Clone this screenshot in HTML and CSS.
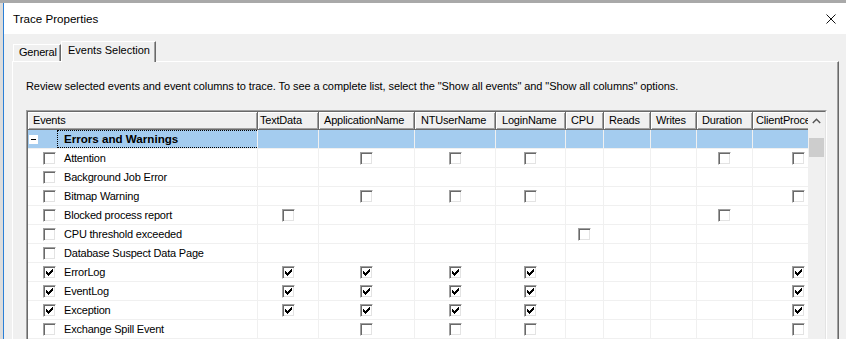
FILE: index.html
```html
<!DOCTYPE html>
<html>
<head>
<meta charset="utf-8">
<title>Trace Properties</title>
<link rel="stylesheet" href="styles.css">
</head>
<body>
<svg class="defs" width="0" height="0" aria-hidden="true">
  <symbol id="ck" viewBox="0 0 7 7">
    <path d="M6 0h1v1h-1z M5 1h2v1h-2z M0 2h1v1h-1z M4 2h3v1h-3z M0 3h2v1h-2z M3 3h3v1h-3z M0 4h5v1h-5z M1 5h3v1h-3z M2 6h1v1h-1z" fill="#000"/>
  </symbol>
</svg>
<div class="screen">
  <div class="left-strip"></div>
  <div class="window">
    <div class="titlebar">
      <span class="title">Trace Properties</span>
      <svg class="close" width="10" height="10" viewBox="0 0 10 10"><path d="M0.5 0.5L9.5 9.5M9.5 0.5L0.5 9.5" stroke="#111" stroke-width="1"/></svg>
    </div>
    <div class="client">
      <div class="tabs">
        <div class="tab general">General</div>
        <div class="tab selected">Events Selection</div>
      </div>
      <div class="panel">
        <p class="desc">Review selected events and event columns to trace. To see a complete list, select the "Show all events" and "Show all columns" options.</p>
        <div class="grid">
          <div class="grid-in">
            <div class="table-wrap">
              <div class="row head">
                <div class="h">Events</div>
                <div class="h td">TextData</div>
                <div class="h">ApplicationName</div>
                <div class="h nt">NTUserName</div>
                <div class="h nt">LoginName</div>
                <div class="h">CPU</div>
                <div class="h">Reads</div>
                <div class="h">Writes</div>
                <div class="h">Duration</div>
                <div class="h cp">ClientProcessID</div>
              </div>
              <div class="row group">
                <div class="c ev"><span class="exp"><span class="minus"></span></span><span class="focus">Errors and Warnings</span></div>
                <div class="c"></div><div class="c"></div><div class="c"></div><div class="c"></div><div class="c"></div><div class="c"></div><div class="c"></div><div class="c"></div><div class="c"></div>
              </div>
              <div class="row">
                <div class="c ev"><span class="cb"></span><span class="name">Attention</span></div>
                <div class="c"></div>
                <div class="c"><span class="cb"></span></div>
                <div class="c"><span class="cb"></span></div>
                <div class="c"><span class="cb"></span></div>
                <div class="c"></div><div class="c"></div><div class="c"></div>
                <div class="c"><span class="cb"></span></div>
                <div class="c"><span class="cb"></span></div>
              </div>
              <div class="row">
                <div class="c ev"><span class="cb"></span><span class="name">Background Job Error</span></div>
                <div class="c"></div><div class="c"></div><div class="c"></div><div class="c"></div><div class="c"></div><div class="c"></div><div class="c"></div><div class="c"></div><div class="c"></div>
              </div>
              <div class="row">
                <div class="c ev"><span class="cb"></span><span class="name">Bitmap Warning</span></div>
                <div class="c"></div>
                <div class="c"><span class="cb"></span></div>
                <div class="c"><span class="cb"></span></div>
                <div class="c"><span class="cb"></span></div>
                <div class="c"></div><div class="c"></div><div class="c"></div><div class="c"></div>
                <div class="c"><span class="cb"></span></div>
              </div>
              <div class="row">
                <div class="c ev"><span class="cb"></span><span class="name">Blocked process report</span></div>
                <div class="c"><span class="cb"></span></div>
                <div class="c"></div><div class="c"></div><div class="c"></div><div class="c"></div><div class="c"></div><div class="c"></div>
                <div class="c"><span class="cb"></span></div>
                <div class="c"></div>
              </div>
              <div class="row">
                <div class="c ev"><span class="cb"></span><span class="name">CPU threshold exceeded</span></div>
                <div class="c"></div><div class="c"></div><div class="c"></div><div class="c"></div>
                <div class="c"><span class="cb"></span></div>
                <div class="c"></div><div class="c"></div><div class="c"></div><div class="c"></div>
              </div>
              <div class="row">
                <div class="c ev"><span class="cb"></span><span class="name">Database Suspect Data Page</span></div>
                <div class="c"></div><div class="c"></div><div class="c"></div><div class="c"></div><div class="c"></div><div class="c"></div><div class="c"></div><div class="c"></div><div class="c"></div>
              </div>
              <div class="row">
                <div class="c ev"><span class="cb on"><svg viewBox="0 0 7 7"><use href="#ck"/></svg></span><span class="name">ErrorLog</span></div>
                <div class="c"><span class="cb on"><svg viewBox="0 0 7 7"><use href="#ck"/></svg></span></div>
                <div class="c"><span class="cb on"><svg viewBox="0 0 7 7"><use href="#ck"/></svg></span></div>
                <div class="c"><span class="cb on"><svg viewBox="0 0 7 7"><use href="#ck"/></svg></span></div>
                <div class="c"><span class="cb on"><svg viewBox="0 0 7 7"><use href="#ck"/></svg></span></div>
                <div class="c"></div><div class="c"></div><div class="c"></div><div class="c"></div>
                <div class="c"><span class="cb on"><svg viewBox="0 0 7 7"><use href="#ck"/></svg></span></div>
              </div>
              <div class="row">
                <div class="c ev"><span class="cb on"><svg viewBox="0 0 7 7"><use href="#ck"/></svg></span><span class="name">EventLog</span></div>
                <div class="c"><span class="cb on"><svg viewBox="0 0 7 7"><use href="#ck"/></svg></span></div>
                <div class="c"><span class="cb on"><svg viewBox="0 0 7 7"><use href="#ck"/></svg></span></div>
                <div class="c"><span class="cb on"><svg viewBox="0 0 7 7"><use href="#ck"/></svg></span></div>
                <div class="c"><span class="cb on"><svg viewBox="0 0 7 7"><use href="#ck"/></svg></span></div>
                <div class="c"></div><div class="c"></div><div class="c"></div><div class="c"></div>
                <div class="c"><span class="cb on"><svg viewBox="0 0 7 7"><use href="#ck"/></svg></span></div>
              </div>
              <div class="row">
                <div class="c ev"><span class="cb on"><svg viewBox="0 0 7 7"><use href="#ck"/></svg></span><span class="name">Exception</span></div>
                <div class="c"><span class="cb on"><svg viewBox="0 0 7 7"><use href="#ck"/></svg></span></div>
                <div class="c"><span class="cb on"><svg viewBox="0 0 7 7"><use href="#ck"/></svg></span></div>
                <div class="c"><span class="cb on"><svg viewBox="0 0 7 7"><use href="#ck"/></svg></span></div>
                <div class="c"><span class="cb on"><svg viewBox="0 0 7 7"><use href="#ck"/></svg></span></div>
                <div class="c"></div><div class="c"></div><div class="c"></div><div class="c"></div>
                <div class="c"><span class="cb on"><svg viewBox="0 0 7 7"><use href="#ck"/></svg></span></div>
              </div>
              <div class="row">
                <div class="c ev"><span class="cb"></span><span class="name">Exchange Spill Event</span></div>
                <div class="c"></div>
                <div class="c"><span class="cb"></span></div>
                <div class="c"><span class="cb"></span></div>
                <div class="c"><span class="cb"></span></div>
                <div class="c"></div><div class="c"></div><div class="c"></div><div class="c"></div>
                <div class="c"><span class="cb"></span></div>
              </div>
            </div>
            <div class="vscroll">
              <div class="arrow"><svg width="9" height="6" viewBox="0 0 9 6"><path d="M0.8 5L4.5 1.3L8.2 5" fill="none" stroke="#555" stroke-width="1.4"/></svg></div>
              <div class="thumb"></div>
            </div>
          </div>
        </div>
      </div>
    </div>
  </div>
</div>
</body>
</html>
```
FILE: styles.css
```css
* { box-sizing: border-box; }
html, body { margin: 0; padding: 0; }
body {
  background: #a9a9a9;
  overflow: hidden;
  font-family: "Liberation Sans", Arial, sans-serif;
  color: #000;
  width: 846px;
  height: 339px;
}
.defs { position: absolute; width: 0; height: 0; }
.screen {
  display: flex;
  height: 339px;
  padding-top: 3px;
  overflow: hidden;
}
.left-strip {
  width: 3px;
  flex: none;
  background: #dcdcdc;
}
.window {
  flex: 1;
  min-width: 0;
  border-left: 1px solid #2b7fd6;
  display: flex;
  flex-direction: column;
  background: #f0f0f0;
}
.titlebar {
  height: 31px;
  flex: none;
  background: #fff;
  display: flex;
  align-items: center;
  justify-content: space-between;
  padding: 0 10px 0 9px;
}
.title {
  font-size: 11.6px;
  color: #000;
}
.close { display: block; margin-top: 1px; }
.client {
  flex: 1;
  background: #f0f0f0;
  padding-left: 8px;
}
.tabs {
  display: flex;
  align-items: flex-end;
  height: 27px;
  padding-left: 1px;
}
.tab {
  font-size: 11px;
  background: #f0f0f0;
  border-top: 1px solid #fff;
  border-left: 1px solid #fff;
  border-right: 1px solid #696969;
  box-shadow: inset -1px 0 #a0a0a0;
  white-space: nowrap;
}
.tab.general {
  width: 48px;
  height: 17px;
  line-height: 15px;
  padding-left: 5px;
  letter-spacing: -0.2px;
}
.tab.selected {
  width: 95px;
  height: 21px;
  line-height: 17px;
  padding-left: 6px;
  margin-bottom: -1px;
  position: relative;
  z-index: 1;
}
.panel {
  width: 827px;
  height: 320px;
  border-top: 1px solid #fff;
  border-left: 1px solid #fff;
  border-right: 1px solid #696969;
  box-shadow: inset -1px 0 #a0a0a0;
  padding: 17px 10px 0 13px;
}
.desc {
  margin: 0;
  font-size: 11px;
  line-height: 14px;
  height: 14px;
  white-space: nowrap;
  letter-spacing: -0.08px;
}
.grid {
  margin-top: 17px;
  width: 801px;
  border: 1px solid;
  border-color: #a0a0a0 #fff #fff #a0a0a0;
}
.grid-in {
  border: 1px solid;
  border-color: #696969 #e3e3e3 #e3e3e3 #696969;
  display: flex;
  background: #fff;
  height: 260px;
}
.table-wrap {
  width: 780px;
  flex: none;
  overflow: hidden;
}
.row {
  display: grid;
  grid-template-columns: 230px 61px 96px 81px 70px 38px 47px 46px 56px 92px;
  width: 817px;
}
.h {
  height: 18px;
  background: #f0f0f0;
  border-right: 1px solid #696969;
  border-bottom: 1px solid #696969;
  box-shadow: inset 1px 1px #fff, inset -1px -1px #a0a0a0;
  font-size: 11px;
  letter-spacing: -0.2px;
  line-height: 17px;
  padding-left: 5px;
  white-space: nowrap;
  overflow: hidden;
}
.h.td { padding-left: 2px; }
.h.nt { padding-left: 6px; }
.h.cp { padding-left: 3px; }
.c {
  height: 19px;
  border-right: 1px solid #f0f0f0;
  border-bottom: 1px solid #f0f0f0;
  display: flex;
  align-items: center;
  justify-content: center;
  font-size: 11px;
  letter-spacing: -0.2px;
  white-space: nowrap;
}
.c.ev {
  justify-content: flex-start;
  padding-left: 15px;
}
.name { margin-left: 8px; }
.group .c { background: #a4ccef; }
.group .c.ev {
  padding-left: 1px;
  align-items: stretch;
}
.exp {
  width: 9px;
  height: 9px;
  background: #fff;
  align-self: center;
  margin-top: 1px;
  display: flex;
  align-items: center;
  justify-content: center;
  flex: none;
}
.minus {
  width: 5px;
  height: 1px;
  background: #000;
}
.focus {
  margin-left: 19px;
  flex: 1;
  border: 1px dotted #000;
  border-right: none;
  font-weight: bold;
  font-size: 11.6px;
  letter-spacing: 0;
  padding-left: 6px;
  line-height: 16px;
}
.cb {
  width: 13px;
  height: 13px;
  flex: none;
  background: #fff;
  border: 1px solid;
  border-color: #a0a0a0 #fff #fff #a0a0a0;
  box-shadow: inset 1px 1px #696969, inset -1px -1px #e3e3e3;
  display: flex;
  align-items: center;
  justify-content: center;
  margin-top: 1px;
}
.cb svg {
  width: 7px;
  height: 7px;
  display: block;
  shape-rendering: crispEdges;
}
.vscroll {
  width: 17px;
  flex: none;
  background: #f0f0f0;
}
.arrow {
  height: 17px;
  display: flex;
  align-items: center;
  justify-content: center;
  padding-right: 1px;
}
.arrow svg { display: block; }
.thumb {
  margin: 9px 1px 0 1px;
  height: 19px;
  background: #cdcdcd;
}
```
